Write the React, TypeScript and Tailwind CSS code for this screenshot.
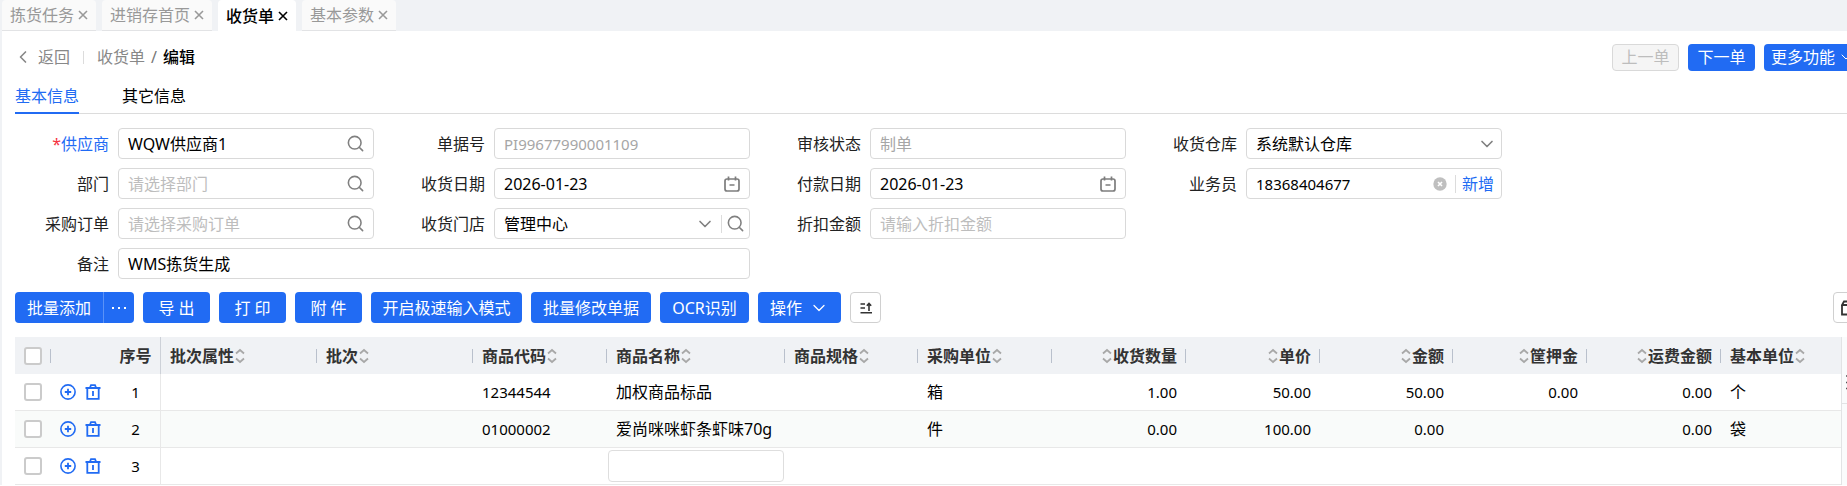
import { ReactNode } from "react";
import { ChevronDown, ChevronLeft, Search } from "lucide-react";

const tabs = [
  { name: "拣货任务", active: false },
  { name: "进销存首页", active: false },
  { name: "收货单", active: true },
  { name: "基本参数", active: false },
];

const columns = [
  { name: "批次属性", width: 156, right: false },
  { name: "批次", width: 156, right: false },
  { name: "商品代码", width: 134, right: false },
  { name: "商品名称", width: 178, right: false },
  { name: "商品规格", width: 133, right: false },
  { name: "采购单位", width: 134, right: false },
  { name: "收货数量", width: 134, right: true },
  { name: "单价", width: 134, right: true },
  { name: "金额", width: 133, right: true },
  { name: "筐押金", width: 134, right: true },
  { name: "运费金额", width: 134, right: true },
  { name: "基本单位", width: 120, right: false },
];

const rows = [
  ["", "", "12344544", "加权商品标品", "", "箱", "1.00", "50.00", "50.00", "0.00", "0.00", "个"],
  ["", "", "01000002", "爱尚咪咪虾条虾味70g", "", "件", "0.00", "100.00", "0.00", "", "0.00", "袋"],
  ["", "", "", "", "", "", "", "", "", "", "", ""],
];

const CloseIcon = () => (
  <svg className="h-[10px] w-[10px]" viewBox="0 0 10 10" fill="none" stroke="currentColor" strokeWidth="1.6">
    <path d="M1 1l8 8M9 1 1 9" />
  </svg>
);

const SortIcon = () => (
  <svg className="h-4 w-[10px] shrink-0" viewBox="0 0 10 16" fill="none" stroke="#a8a8a8" strokeWidth="1.8">
    <path d="M1 5.5 5 2l4 3.5M1 10.5 5 14l4-3.5" />
  </svg>
);

const CalendarIcon = () => (
  <svg className="h-4 w-4 shrink-0" viewBox="0 0 16 16" fill="none" stroke="#7d7d7d" strokeWidth="1.7">
    <rect x="1" y="3" width="14" height="12" rx="2" />
    <path d="M4.5 0.5v4M11.5 0.5v4M5.5 9h5" />
  </svg>
);

const PlusIcon = () => (
  <svg className="h-4 w-4" viewBox="0 0 16 16" fill="none" stroke="#216bf3" strokeWidth="1.6">
    <circle cx="8" cy="8" r="7.1" />
    <path d="M8 4.8v6.4M4.8 8h6.4" strokeWidth="1.8" />
  </svg>
);

const TrashIcon = () => (
  <svg className="h-4 w-4" viewBox="0 0 16 16" fill="none" stroke="#216bf3" strokeWidth="1.8">
    <path d="M0.5 4h15M2.3 4v10.8h11.4V4M8 7v5M5 3.5 6 1.2h4l1 2.3" />
  </svg>
);

const ClearIcon = () => (
  <svg className="h-[14px] w-[14px]" viewBox="0 0 14 14">
    <circle cx="7" cy="7" r="6.7" fill="#bfbfbf" />
    <path d="M5 5l4 4M9 5l-4 4" stroke="#fff" strokeWidth="1.6" />
  </svg>
);

type FieldProps = {
  id: string;
  label: string;
  value?: string;
  placeholder?: string;
  first?: boolean;
  required?: boolean;
  wide?: boolean;
  disabled?: boolean;
  numeric?: boolean;
  children?: ReactNode;
};

const Field = ({ id, label, value, placeholder, first, required, wide, disabled, numeric, children }: FieldProps) => (
  <div className={`flex h-[31px] min-w-0 items-center ${wide ? "col-span-2" : ""}`}>
    <label
      htmlFor={id}
      className={`shrink-0 pr-[9px] text-right ${first ? "w-[116px]" : "w-[120px]"} ${
        required ? "text-[#1f6bf5]" : "text-[#222]"
      }`}
    >
      {required && <span className="text-[#f5333f]">*</span>}
      {label}
    </label>
    <div className="flex h-full min-w-0 flex-1 items-center rounded-[4px] border border-[#d9d9d9] bg-white pl-[9px]">
      <input
        id={id}
        type="text"
        defaultValue={value}
        placeholder={placeholder}
        disabled={disabled}
        className={`min-w-0 flex-1 bg-transparent outline-none placeholder:text-[#bdbdbd] ${
          disabled ? "text-[#a6a6a6]" : "text-black"
        } ${numeric ? "text-[15px]" : ""}`}
      />
      {children}
    </div>
  </div>
);

const SelectField = ({ id, label, value, children }: FieldProps) => (
  <div className="flex h-[31px] min-w-0 items-center">
    <label htmlFor={id} className="w-[120px] shrink-0 pr-[9px] text-right text-[#222]">
      {label}
    </label>
    <div className="flex h-full min-w-0 flex-1 items-center rounded-[4px] border border-[#d9d9d9] bg-white pl-[9px]">
      <select id={id} className="min-w-0 flex-1 appearance-none bg-transparent text-black outline-none">
        <option>{value}</option>
      </select>
      <ChevronDown className="pointer-events-none h-5 w-5 shrink-0 text-[#808080]" />
      {children}
    </div>
  </div>
);

const SearchButton = () => (
  <button type="button" aria-label="搜索" className="mr-2 text-[#808080]">
    <Search className="h-[19px] w-[19px]" />
  </button>
);

const primary = "flex h-[31px] shrink-0 items-center justify-center rounded-[4px] bg-[#216bf3] text-white";

const App = () => {
  return (
    <div className="overflow-hidden bg-[#f0f2f5] pl-[2px] font-['Noto_Sans','Noto_Sans_CJK_SC',sans-serif] text-base leading-5 whitespace-nowrap">
      <nav className="flex h-[31px] gap-[6px]">
        {tabs.map((tab) => (
          <div
            key={tab.name}
            className={`flex items-center gap-1 rounded-t-[4px] px-2 ${
              tab.active
                ? "bg-white font-medium text-black"
                : "border-b border-[#e2e3e5] bg-[#fafafa] text-[#999]"
            }`}
          >
            <a href="#">{tab.name}</a>
            <button type="button" aria-label="关闭">
              <CloseIcon />
            </button>
          </div>
        ))}
      </nav>

      <main className="bg-white">
        <header className="flex h-[52px] items-center pl-[11px]">
          <a href="#" className="flex items-center text-[#888]">
            <ChevronLeft className="mr-[5px] h-5 w-5" />
            返回
          </a>
          <span className="mx-[13px] h-[13px] w-px bg-[#dcdcdc]" />
          <a href="#" className="text-[#888]">
            收货单
          </a>
          <span className="mx-[6px] text-[#777]">/</span>
          <span className="font-medium text-black">编辑</span>
          <div className="-mr-[14px] ml-auto flex gap-[9px]">
            <button
              type="button"
              disabled
              className="h-[27px] w-[67px] rounded-[4px] border border-[#d9d9d9] bg-[#f5f5f5] text-[#bdbdbd]"
            >
              上一单
            </button>
            <button type="button" className="h-[27px] w-[67px] rounded-[4px] bg-[#216bf3] text-white">
              下一单
            </button>
            <button
              type="button"
              className="flex h-[27px] w-[97px] items-center justify-between rounded-[4px] bg-[#216bf3] px-[7px] text-white"
            >
              更多功能
              <ChevronDown className="h-4 w-4" strokeWidth={1.5} />
            </button>
          </div>
        </header>

        <div className="ml-[13px] flex h-[31px] gap-[43px] border-b border-[#dcdcdc]">
          <a href="#" className="h-[31px] border-b-2 border-[#216bf3] pt-[3px] text-[#216bf3]">
            基本信息
          </a>
          <a href="#" className="pt-[3px] text-black">
            其它信息
          </a>
        </div>

        <form className="grid grid-cols-[372fr_376fr_376fr_376fr_345fr] gap-y-[9px] pt-[14px]">
          <Field id="supplier" label="供应商" value="WQW供应商1" first required>
            <SearchButton />
          </Field>
          <Field id="code" label="单据号" value="PI99677990001109" disabled numeric />
          <Field id="status" label="审核状态" value="制单" disabled />
          <SelectField id="warehouse" label="收货仓库" value="系统默认仓库">
            <span className="w-1" />
          </SelectField>
          <span />
          <Field id="department" label="部门" placeholder="请选择部门" first>
            <SearchButton />
          </Field>
          <Field id="receiveDate" label="收货日期" value="2026-01-23">
            <span className="mr-[9px]">
              <CalendarIcon />
            </span>
          </Field>
          <Field id="payDate" label="付款日期" value="2026-01-23">
            <span className="mr-[9px]">
              <CalendarIcon />
            </span>
          </Field>
          <Field id="salesman" label="业务员" value="18368404677" numeric>
            <button type="button" aria-label="清除">
              <ClearIcon />
            </button>
            <span className="mr-[6px] ml-2 h-[18px] w-px bg-[#dcdcdc]" />
            <button type="button" className="mr-[7px] text-[#216bf3]">
              新增
            </button>
          </Field>
          <span />
          <Field id="order" label="采购订单" placeholder="请选择采购订单" first>
            <SearchButton />
          </Field>
          <SelectField id="store" label="收货门店" value="管理中心">
            <span className="mr-1 ml-[6px] h-[18px] w-px bg-[#dcdcdc]" />
            <button type="button" aria-label="搜索" className="mr-1 text-[#808080]">
              <Search className="h-[19px] w-[19px]" />
            </button>
          </SelectField>
          <Field id="discount" label="折扣金额" placeholder="请输入折扣金额" />
          <span />
          <span />
          <Field id="remark" label="备注" value="WMS拣货生成" first wide />
        </form>

        <div className="mt-[13px] ml-[13px] flex gap-[9px]">
          <div className="flex h-[31px] w-[119px] overflow-hidden rounded-[4px] bg-[#216bf3] text-white">
            <button type="button" className="flex-1">
              批量添加
            </button>
            <button
              type="button"
              aria-label="更多"
              className="flex w-[31px] items-center justify-center gap-[4px] border-l border-[#5a92f7]"
            >
              <i className="h-[2px] w-[2px] bg-white" />
              <i className="h-[2px] w-[2px] bg-white" />
              <i className="h-[2px] w-[2px] bg-white" />
            </button>
          </div>
          <button type="button" className={`${primary} w-[67px]`}>
            导 出
          </button>
          <button type="button" className={`${primary} w-[67px]`}>
            打 印
          </button>
          <button type="button" className={`${primary} w-[67px]`}>
            附 件
          </button>
          <button type="button" className={`${primary} w-[151px]`}>
            开启极速输入模式
          </button>
          <button type="button" className={`${primary} w-[120px]`}>
            批量修改单据
          </button>
          <button type="button" className={`${primary} w-[89px]`}>
            OCR识别
          </button>
          <button type="button" className={`${primary} w-[83px] gap-[7px]`}>
            操作
            <ChevronDown className="h-5 w-5" strokeWidth={1.5} />
          </button>
          <button
            type="button"
            aria-label="排序"
            className="flex h-[31px] w-[31px] items-center justify-center rounded-[4px] border border-[#d0d0d0] bg-white"
          >
            <svg className="h-3 w-3" viewBox="0 0 12 12" fill="none" stroke="#333" strokeWidth="1.6">
              <path d="M0.5 2H5M0.5 6H5M0.5 10.8H12M9 9V1.5M6.8 3.7 9 1.5l2.2 2.2" />
            </svg>
          </button>
          <button
            type="button"
            aria-label="列设置"
            className="-mr-[17px] ml-auto flex h-[31px] w-[31px] items-center justify-center rounded-[4px] border border-[#d0d0d0] bg-white"
          >
            <svg className="h-4 w-4" viewBox="0 0 16 16" fill="none" stroke="#333" strokeWidth="1.8">
              <path d="M1 5V14.5h14V5L13 1.5H3L1 5h14M6 8.5h4" />
            </svg>
          </button>
        </div>

        <div className="mt-[14px] flex pl-[13px]">
          <table className="w-full flex-1 table-fixed border-separate border-spacing-0">
            <colgroup>
              <col style={{ width: 36 }} />
              <col style={{ width: 60 }} />
              <col style={{ width: 50 }} />
              {columns.map((column) => (
                <col key={column.name} style={{ width: column.width }} />
              ))}
            </colgroup>
            <thead>
              <tr className="h-[37px] bg-[#f0f2f5] text-[#333]">
                <th className="p-0">
                  <div className="flex items-center pl-[9px]">
                    <input
                      type="checkbox"
                      aria-label="全选"
                      className="h-[18px] w-[18px] appearance-none rounded-[3px] border-2 border-[#cbcbcb] bg-white"
                    />
                    <span className="ml-auto h-[14px] w-px bg-[#b9c0cc]" />
                  </div>
                </th>
                <th className="p-0" />
                <th className="border-r border-[#cdd1d8] p-0">序号</th>
                {columns.map((column, index) => (
                  <th key={column.name} className="p-0">
                    <div className={`flex items-center ${column.right ? "" : "pl-[9px]"}`}>
                      <div className={`flex items-center gap-px ${column.right ? "ml-auto flex-row-reverse" : ""}`}>
                        {column.name}
                        <SortIcon />
                      </div>
                      {index < columns.length - 1 && (
                        <span className={`h-[14px] w-px bg-[#b9c0cc] ${column.right ? "ml-2" : "ml-auto"}`} />
                      )}
                    </div>
                  </th>
                ))}
              </tr>
            </thead>
            <tbody>
              {rows.map((row, index) => (
                <tr key={index} className="h-[37px] text-black even:bg-[#f9fbfa]">
                  <td className="border-b border-[#e8e8e8] p-0 pl-[9px]">
                    <input
                      type="checkbox"
                      aria-label={`选择第${index + 1}行`}
                      className="block h-[18px] w-[18px] appearance-none rounded-[3px] border-2 border-[#cbcbcb] bg-white"
                    />
                  </td>
                  <td className="border-b border-[#e8e8e8] p-0">
                    <div className="flex gap-[9px] pl-[9px]">
                      <button type="button" aria-label="新增行">
                        <PlusIcon />
                      </button>
                      <button type="button" aria-label="删除行">
                        <TrashIcon />
                      </button>
                    </div>
                  </td>
                  <td className="border-r border-b border-[#e8e8e8] p-0 text-center text-[15px]">{index + 1}</td>
                  {row.map((cell, i) => (
                    <td
                      key={i}
                      className={`border-b border-[#e8e8e8] py-0 ${
                        index === 2 && i === 3
                          ? "px-px"
                          : columns[i].right
                            ? "pr-[9px] pl-0 text-right text-[15px]"
                            : "pr-0 pl-[9px]"
                      } ${i === 2 ? "text-[15px]" : ""}`}
                    >
                      {index === 2 && i === 3 ? (
                        <input
                          type="text"
                          aria-label="商品名称"
                          className="block h-8 w-full rounded-[4px] border border-[#dedede] bg-white px-2 outline-none"
                        />
                      ) : (
                        cell
                      )}
                    </td>
                  ))}
                </tr>
              ))}
            </tbody>
          </table>
          <aside className="w-[6px] shrink-0 border-l border-[#e2e3e5] bg-[#fafbfc]">
            <div className="h-[67px] border-b border-[#e2e3e5] pt-[38px] pl-1">
              <svg className="h-4 w-px" viewBox="0 0 1 16" stroke="#555" strokeWidth="1.5">
                <path d="M0 1h1M0 7.500h1M0 13.500h1" />
              </svg>
            </div>
          </aside>
        </div>
      </main>
    </div>
  );
};

export default App;
